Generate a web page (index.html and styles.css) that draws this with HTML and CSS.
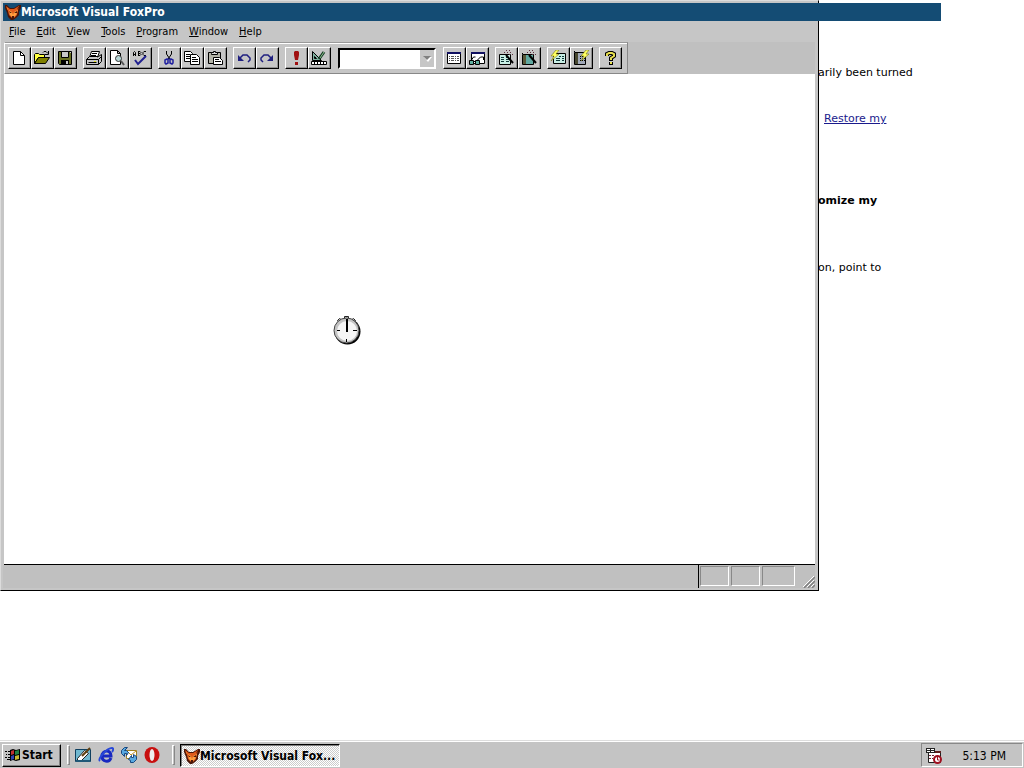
FILE: index.html
```html
<!DOCTYPE html>
<html lang="en">
<head>
  <meta charset="UTF-8">
  <title>Microsoft Visual FoxPro</title>
  <link rel="stylesheet" href="styles.css">
</head>
<body>
  <svg class="sprite" aria-hidden="true">
    <symbol id="fox" viewBox="0 0 16 16">
      <path fill="#4a1608" d="M0 1h2l3 3h4l5-3h2v3l-2 4v3l-3 3-3 2H6l-3-3-1-4-2-5z"/>
      <path fill="#e05a1c" d="M1 2l4 3h4l5-3-1 4-1 5-3 3H7l-3-3-1-4z"/>
      <path fill="#ffa040" d="M4 6l3 2 1 3 1-3 4-2-2 5-2 2H7l-2-2zM1 3l2 2v1z"/>
      <path fill="#4a1608" d="M4 7l3 2H5zM12 7l-3 2h3zM7 12h2v2H7zM13 3h1l-2 3z"/>
    </symbol>
  </svg>

  <main class="desktop">
    <article class="page">
      <p>arily been turned</p>
      <p class="restore"><a href="#">Restore my</a></p>
      <h2>omize my</h2>
      <p>on, point to</p>
    </article>

    <section class="window">
      <header class="title-bar">
        <svg class="icon"><use href="#fox"/></svg>
        <h1>Microsoft Visual FoxPro</h1>
      </header>

      <nav class="menu-bar">
        <button><u>F</u>ile</button>
        <button><u>E</u>dit</button>
        <button><u>V</u>iew</button>
        <button><u>T</u>ools</button>
        <button><u>P</u>rogram</button>
        <button><u>W</u>indow</button>
        <button><u>H</u>elp</button>
      </nav>

      <div class="dock">
        <div class="toolbar">
          <div class="group">
            <button aria-label="New"><svg class="icon" viewBox="0 0 16 16">
              <path fill="#fff" stroke="#000" d="M2.500 1.500h7l4 4v9h-11z"/><path fill="none" stroke="#000" d="M9.500 1.500v4h4"/></svg></button>
            <button aria-label="Open"><svg class="icon" viewBox="0 0 16 16">
              <path fill="#ffff40" stroke="#000" d="M.5 13.500v-9l1-1h3l1 1h5v3h-6l-4 6"/><path fill="#808000" stroke="#000" d="M.5 13.500l4-6h11l-4 6z"/><path fill="none" stroke="#000" d="M9 2.500l1-1h2l2 2M14.500 1v3.500H11"/></svg></button>
            <button aria-label="Save"><svg class="icon" viewBox="0 0 16 16">
              <path fill="#687020" stroke="#000" d="M1.500 1.500h13v13h-12l-1-1z"/><path fill="#c8c8c8" stroke="#000" d="M4.500 1.500h7v6h-7z"/><path d="M4 10h8v5H4z"/><path fill="#c8c8c8" d="M9 11h2v3H9zM13 2h1v1h-1z"/></svg></button>
          </div>
          <div class="group">
            <button aria-label="Print"><svg class="icon" viewBox="0 0 16 16">
              <path fill="#fff" stroke="#000" d="M3.500 7.500l2-6h8l-2 6"/><path fill="#c8c8c8" stroke="#000" d="M.5 9.500l3-3h9l3-2v7l-3 3h-12zM.5 9.500h12l3-3M12.500 9.500v5M2.500 12.500h8"/><path stroke="#000" d="M6 3.500h5M5 5.500h5"/><path fill="#dddd20" d="M8 11h2v1H8z"/></svg></button>
            <button aria-label="Print Preview"><svg class="icon" viewBox="0 0 16 16">
              <path fill="#fff" stroke="#000" d="M1.500.5h7l3 3v11h-10zM8.500.5v3h3"/><circle cx="9.500" cy="8.500" r="3" fill="#b8d8d8" stroke="#333"/><path stroke="#555" stroke-width="2" d="M12 11l3 4"/></svg></button>
            <button aria-label="Spelling"><svg class="icon" viewBox="0 0 16 16">
              <path fill="none" stroke="#000" d="M1.500 6V2.500l1-1 1 1V6M1 4.500h3M6.500 1v5M6 1.500h2l1 1-1 1H6h2l1 1-1 1H6M14 1.500h-2l-1 1v2l1 1h2"/><path fill="none" stroke="#202090" stroke-width="2" d="M3 10l3 4 8-8"/></svg></button>
          </div>
          <div class="group">
            <button aria-label="Cut"><svg class="icon" viewBox="0 0 16 16">
              <path fill="none" stroke="#000" d="M5.500 1v3l4 6M10.500 1v3l-4 6"/><path fill="none" stroke="#2020a0" stroke-width="1.500" d="M6 9l-2 1v3l1 1 2-1V9zM10 9l2 1v3l-1 1-2-1V9z"/></svg></button>
            <button aria-label="Copy"><svg class="icon" viewBox="0 0 16 16">
              <path fill="#fff" stroke="#000" d="M.5 1.500h6l2 2v8h-8z"/><path stroke="#000" d="M2 4.500h4M2 6.500h5M2 8.500h5"/><path fill="#fff" stroke="#000" d="M6.500 4.500h6l3 3v7h-9z"/><path stroke="#000" d="M8 7.500h4M8 9.500h6M8 11.500h6"/></svg></button>
            <button aria-label="Paste"><svg class="icon" viewBox="0 0 16 16">
              <path fill="#b4b4a8" stroke="#000" d="M1.500 2.500h12v11h-12z"/><path fill="#ddd" stroke="#000" d="M4.500 3.500v-1h2v-1h2v1h2v2h-6z"/><path fill="#fff" stroke="#000" d="M6.500 7.500h6l3 3v4h-9z"/><path stroke="#000" d="M8 9.500h4M8 11.500h6"/></svg></button>
          </div>
          <div class="group">
            <button aria-label="Undo"><svg class="icon" viewBox="0 0 16 16">
              <path fill="none" stroke="#202080" stroke-width="1.500" d="M4 8l3-3h4l3 3v2l-2 2"/><path fill="#202080" d="M2 5v6h6z"/></svg></button>
            <button aria-label="Redo"><svg class="icon" viewBox="0 0 16 16">
              <path fill="none" stroke="#202080" stroke-width="1.500" d="M12 8L9 5H5L2 8v2l2 2"/><path fill="#202080" d="M14 5v6H8z"/></svg></button>
          </div>
          <div class="group">
            <button aria-label="Run"><svg class="icon" viewBox="0 0 16 16">
              <path fill="#a01010" d="M7 1h3l1 1v3l-1 5H7L6 5V2zM7 12h3v3H7z"/></svg></button>
            <button aria-label="Modify Form"><svg class="icon" viewBox="0 0 16 16">
              <path fill="#80b0a0" stroke="#000" d="M1.500 1.500v9h9z"/><path fill="#c6c6c6" stroke="#000" d="M3.500 6.500v2h2z"/><path fill="#fff" stroke="#000" d="M.5 11.500h15v3H.5z"/><path stroke="#000" d="M3.500 12v2M6.500 12v2M9.500 12v2M12.500 12v2"/><path stroke="#103820" stroke-width="3" d="M8 9l5-7"/><path stroke="#90c090" d="M9 8l4-6"/></svg></button>
          </div>
          <div class="combo">
            <select aria-label="Database"><option></option></select>
            <svg class="combo-arrow" viewBox="0 0 14 17"><path fill="#fff" d="M4 7h8l-4 5z"/><path fill="#808080" d="M3 6h8l-4 4z"/></svg>
          </div>
          <div class="group">
            <button aria-label="Command Window"><svg class="icon" viewBox="0 0 16 16">
              <path fill="#fff" stroke="#000" d="M1.500 2.500h13v11h-13z"/><path fill="#101060" d="M1 2h14v2H1z"/><path stroke="#555" stroke-dasharray="1 1 3 1" d="M3 6.500h10M3 8.500h10M3 10.500h10"/></svg></button>
            <button aria-label="View Window"><svg class="icon" viewBox="0 0 16 16">
              <path fill="#fff" stroke="#000" d="M2.500 2.500h13v11h-13z"/><path fill="#101060" d="M2 2h14v2H2z"/><path fill="none" stroke="#000" d="M2.500 10l2-3h2M8.500 10l3-3h3v3"/><path fill="#60b0a0" stroke="#000" d="M.5 10.500h4v4h-4zM6.500 10.500h4v4h-4zM4 11.500h3"/></svg></button>
          </div>
          <div class="group">
            <button aria-label="Form Wizard"><svg class="icon" viewBox="0 0 16 16">
              <path fill="#c8eee4" stroke="#000" d="M1.500 4.500h11v10h-11z"/><path stroke="#103838" d="M3 7.500h3M8 7.500h3M3 9.500h3M8 9.500h3M3 11.500h3M8 11.500h3"/><path stroke="#000" stroke-width="2" d="M8 5l7 8"/><path stroke="#603040" stroke-dasharray="1 2" d="M6 2.500h9M8 .5h5M11 4.500h4"/></svg></button>
            <button aria-label="Report Wizard"><svg class="icon" viewBox="0 0 16 16">
              <path fill="#60a8a0" stroke="#000" d="M1.500 4.500h11v10h-11z"/><path fill="#585838" d="M2 5h3v9H2z"/><path stroke="#000" stroke-dasharray="1 1" d="M1.500 3v12"/><path stroke="#000" stroke-width="2" d="M8 5l7 8"/><path stroke="#603040" stroke-dasharray="1 2" d="M6 2.500h9M8 .5h5M11 4.500h4"/></svg></button>
          </div>
          <div class="group">
            <button aria-label="AutoForm"><svg class="icon" viewBox="0 0 16 16">
              <path fill="#c8eee4" stroke="#000" d="M3.500 3.500h12v10h-12z"/><path stroke="#103838" d="M9 6.500h2M12 6.500h2M6 8.500h4M12 8.500h2M6 10.500h4M12 10.500h2"/><path fill="#ffff60" stroke="#606000" stroke-width=".5" d="M6 0h3L6 4h3l-8 7 3-5H1z"/></svg></button>
            <button aria-label="AutoReport"><svg class="icon" viewBox="0 0 16 16">
              <path fill="#a0a8b8" stroke="#000" d="M1.500 2.500h11v12h-11z"/><path fill="#484830" d="M2 3h3v11H2z"/><path stroke="#000" stroke-dasharray="1 1" d="M1.500 1v14M7 6.500h5M7 8.500h5M7 10.500h5"/><path fill="#ffff60" stroke="#606000" stroke-width=".5" d="M13 0h3l-3 4h3l-8 7 3-5H8z"/></svg></button>
          </div>
          <div class="group">
            <button aria-label="Help"><svg class="icon" viewBox="0 0 16 16">
              <path fill="none" stroke="#000" stroke-width="4" d="M5 6V4l2-1h3l2 1v2L9 8v3M9 12v3"/><path fill="none" stroke="#e8e050" stroke-width="2" d="M5 6V4l2-1h3l2 1v2L9 8v2M9 12v2"/></svg></button>
          </div>
        </div>
      </div>

      <div class="workspace">
        <svg class="stopwatch" viewBox="0 0 28 30">
          <path fill="#ccc" stroke="#222" d="M11.500 1.500h4v3h-4zM4.500 5.500l2-2 3 2-3 3zM22.500 5.500l-2-2-3 2 3 3z"/>
          <circle cx="14.500" cy="16.500" r="13" fill="#000"/>
          <circle cx="13.500" cy="15.500" r="12.500" fill="#c4c4c4" stroke="#444"/>
          <circle cx="14" cy="16" r="10" fill="#f6f6f6"/>
          <path stroke="#000" d="M4 15.500h3M20 15.500h4M13.500 24v3"/>
          <path stroke="#000" stroke-width="2" d="M14 4v13"/>
        </svg>
      </div>

      <footer class="status-bar">
        <div class="status-panels">
          <span></span>
          <span></span>
          <span class="wide"></span>
        </div>
        <svg class="size-grip" viewBox="0 0 12 12">
          <path stroke="#fff" d="M0 11L11 0M4 11l7-7M8 11l3-3"/><path stroke="#808080" stroke-width="1.500" d="M1 12L12 1M5 12l7-7M9 12l3-3"/>
        </svg>
      </footer>
    </section>
  </main>

  <footer class="taskbar">
    <button class="start">
      <svg class="icon" viewBox="0 0 16 16">
        <path d="M5 3l3-1 3 1 4-1v11l-4 1-3-1-3 1zM0 4h2v1H0zM3 4h2v1H3zM1 7h1v1H1zM3 7h2v1H3zM0 10h2v1H0zM3 10h2v1H3zM2 12h3v1H2z"/>
        <path fill="#c03030" d="M6 4l3-1v4l-3 1z"/><path fill="#208040" d="M10 4l4-1v4l-4 1z"/><path fill="#3040b0" d="M6 9l3-1v4l-3 1z"/><path fill="#c8b830" d="M10 9l4-1v4l-4 1z"/>
      </svg>
      Start
    </button>
    <i class="grip"></i>
    <div class="quick-launch">
      <button aria-label="Show Desktop"><svg class="icon" viewBox="0 0 16 16">
        <path fill="#70b8d0" stroke="#104060" d="M.5 2.500h15v12H.5z"/><path fill="#fff" stroke="#222" d="M2.500 11.500l7-8 4 3-7 7h-4z"/><path stroke="#604010" stroke-width="2" d="M7 9l8-8"/><path fill="#205878" d="M1 13h14v2H1z"/></svg></button>
      <button aria-label="Internet Explorer"><svg class="icon" viewBox="0 0 16 16">
        <path fill="none" stroke="#1828c0" stroke-width="3" d="M13 11c-2 5-9 4-9-2s9-7 9 0H5"/><path fill="none" stroke="#2848d8" stroke-width="2" d="M2 14C-1 12 9 1 14 1c2 0 1 3 0 4"/></svg></button>
      <button aria-label="Outlook Express"><svg class="icon" viewBox="0 0 16 16">
        <path fill="#fff" stroke="#a08020" d="M5.500 3.500h10v8h-10z"/><path fill="none" stroke="#c09020" d="M6 4l4 4 5-4"/><path fill="#58a8e0" stroke="#184880" d="M6.500.5h-3l-3 3v3l3 3v-3h2v2l2-3-2-2h-2zM9.500 15.500h3l3-3v-3l-3-2v3h-2v-2l-3 4 2 1z"/></svg></button>
      <button aria-label="Opera"><svg class="icon" viewBox="0 0 16 16">
        <ellipse cx="8" cy="8" rx="7.500" ry="8" fill="#c81010"/><ellipse cx="8" cy="8" rx="2.500" ry="6" fill="#eee"/></svg></button>
    </div>
    <i class="grip"></i>
    <button class="task">
      <svg class="icon"><use href="#fox"/></svg>
      Microsoft Visual Fox...
    </button>
    <div class="tray">
      <svg class="icon" viewBox="0 0 16 16">
        <path fill="#fff" stroke="#222" d="M2.500 3.500h12v11h-12z"/><path fill="#222" d="M0 0h9v5H0z"/><path fill="#fff" d="M1 1h3v1H1zM5 1h3v1H5zM1 3h3v1H1zM5 3h3v1H5z"/><path fill="#602020" d="M9 3h6v2H9z"/><path stroke="#702030" stroke-dasharray="2 1" d="M3 7.500h5M3 10.500h4"/><circle cx="11.500" cy="11.500" r="3.500" fill="#fff" stroke="#a01020" stroke-width="2"/><path fill="none" stroke="#a01020" d="M11.500 9v3h2"/></svg>
      <time>5:13 PM</time>
    </div>
  </footer>
</body>
</html>
```

FILE: styles.css
```css
* {
  box-sizing: border-box;
}
body {
  margin: 0;
  height: 100vh;
  display: flex;
  flex-direction: column;
  overflow: hidden;
  background: #fff;
  color: #000;
  font-family: "DejaVu Sans Condensed", "DejaVu Sans", sans-serif;
  font-size: 11px;
  line-height: 16px;
}
button {
  margin: 0;
  padding: 0;
  border: 0;
  background: none;
  color: inherit;
  font: inherit;
}
.sprite {
  display: none;
}
.icon {
  display: block;
  flex: none;
  width: 16px;
  height: 16px;
}

.desktop {
  position: relative;
  flex: 1;
}

/* browser page left behind the window */
.page {
  padding-top: 65px;
  padding-left: calc(100% - 206px);
  font-family: "DejaVu Sans", sans-serif;
}
.page p,
.page h2 {
  margin: 0;
  font-size: 11px;
}
.page .restore {
  padding: 30px 0 66px 6px;
}
.page h2 {
  margin-bottom: 51px;
}
.page a {
  color: #1a1a8c;
}

/* main window */
.window {
  position: absolute;
  top: 0;
  left: 0;
  display: flex;
  flex-direction: column;
  width: calc(100% - 205px);
  height: calc(100% - 149px);
  padding: 2px 3px 2px 2px;
  border: 1px solid #000;
  border-top-color: #dcdcdc;
  border-left-color: #dcdcdc;
  background: #c6c6c6;
}
.title-bar {
  display: flex;
  align-items: center;
  height: 18px;
  margin-right: -126px;
  padding-left: 2px;
  background: #144c74;
  color: #fff;
}
.title-bar h1 {
  margin: 0;
  font-size: 12px;
  line-height: 18px;
}
.menu-bar {
  display: flex;
  gap: 11px;
  height: 21px;
  padding: 1px 6px 0;
}
.dock {
  display: flex;
  margin-left: 1px;
  background: #c0c0c0;
}
.toolbar {
  display: flex;
  align-items: center;
  gap: 6px;
  height: 32px;
  padding: 0 5px 0 3px;
  border: 1px solid #888;
  border-top-color: #999;
  border-left-color: #fff;
  background: #c6c6c6;
  box-shadow: inset 0 1px #fff;
}
.group {
  display: flex;
}
.group button {
  display: flex;
  align-items: center;
  width: 23px;
  height: 22px;
  padding-left: 2px;
  border: 1px solid #000;
  border-top-color: #fff;
  border-left-color: #fff;
  box-shadow: inset -1px -1px #909090;
}
.combo {
  position: relative;
  margin: 0 1px;
}
.combo select {
  display: block;
  width: 98px;
  height: 21px;
  border: 2px solid #fff;
  border-top-color: #000;
  border-left-color: #000;
  border-radius: 0;
  background: #fff;
  appearance: none;
}
.combo-arrow {
  position: absolute;
  top: 2px;
  right: 2px;
  width: 14px;
  height: 17px;
  background: #c6c6c6;
  pointer-events: none;
}
.workspace {
  position: relative;
  flex: 1;
  margin-left: 1px;
  border-bottom: 1px solid #000;
  background: #fff;
}
.stopwatch {
  position: absolute;
  top: 241px;
  left: 329px;
  width: 28px;
  height: 30px;
}
.status-bar {
  display: flex;
  justify-content: flex-end;
  gap: 8px;
  height: 23px;
  background: #c0c0c0;
}
.status-panels {
  display: flex;
  gap: 2px;
  padding: 1px 0 0 1px;
  border-left: 1px solid #000;
}
.status-panels span {
  width: 29px;
  height: 20px;
  border: 1px solid #fff;
  border-top-color: #888;
  border-left-color: #888;
}
.status-panels .wide {
  width: 33px;
}
.size-grip {
  align-self: flex-end;
  width: 12px;
  height: 12px;
}

/* taskbar */
.taskbar {
  display: flex;
  align-items: center;
  height: 28px;
  padding: 2px 1px 1px 2px;
  border-top: 1px solid #ddd;
  background: #c4c4c4;
  box-shadow: inset 0 1px #fff;
  font-size: 12px;
}
.start,
.task {
  display: flex;
  align-items: center;
  height: 23px;
  border: 1px solid #000;
  font-weight: bold;
  white-space: nowrap;
}
.start {
  width: 59px;
  gap: 1px;
  padding-left: 2px;
  border-top-color: #fff;
  border-left-color: #fff;
  box-shadow: inset -1px -1px #808080;
}
.task {
  width: 160px;
  padding: 1px 0 0 3px;
  border-right-color: #fff;
  border-bottom-color: #fff;
  background: repeating-conic-gradient(#fff 0 25%, #ccc 0 50%) 0 0 / 2px 2px;
  box-shadow: inset 1px 1px #808080;
}
.grip {
  width: 3px;
  height: 20px;
  margin: 0 5px 0 6px;
  border: 1px solid #888;
  border-top-color: #fff;
  border-left-color: #fff;
}
.quick-launch {
  display: flex;
  gap: 7px;
  padding-right: 6px;
}
.tray {
  display: flex;
  align-items: center;
  justify-content: space-between;
  width: 102px;
  height: 24px;
  margin-left: auto;
  padding: 1px 16px 0 4px;
  border: 1px solid #fff;
  border-top-color: #888;
  border-left-color: #888;
}
```
